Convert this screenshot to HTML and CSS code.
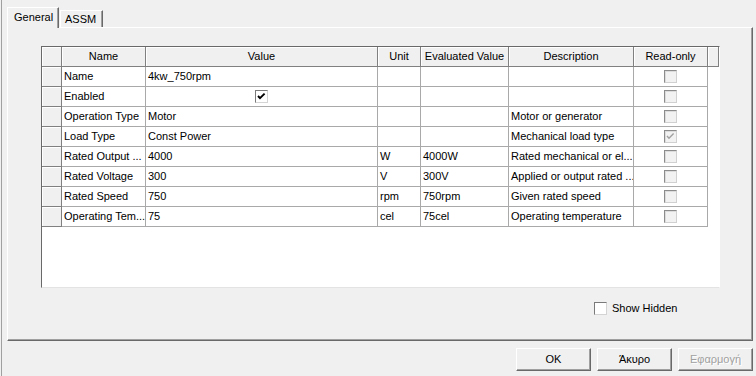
FILE: index.html
```html
<!DOCTYPE html>
<html>
<head>
<meta charset="utf-8">
<link rel="stylesheet" href="styles.css">
</head>
<body>
<div class="window">
  <div class="tabstrip">
    <div class="tab active">General</div>
    <div class="tab">ASSM</div>
  </div>
  <div class="panel">
    <div class="grid">
      <div class="hc"></div>
      <div class="hc">Name</div>
      <div class="hc">Value</div>
      <div class="hc">Unit</div>
      <div class="hc">Evaluated Value</div>
      <div class="hc">Description</div>
      <div class="hc">Read-only</div>
      <div class="hc last"></div>

      <div class="rh"></div><div class="c">Name</div><div class="c">4kw_750rpm</div><div class="c"></div><div class="c"></div><div class="c"></div><div class="c ctr"><span class="cb dis"></span></div><div class="e"></div>

      <div class="rh"></div><div class="c">Enabled</div><div class="c ctr"><span class="cb on"><svg width="11" height="11" viewBox="0 0 11 11"><polyline points="2,5 4,7.2 8.6,2.6" fill="none" stroke="#000" stroke-width="1.9"/></svg></span></div><div class="c"></div><div class="c"></div><div class="c"></div><div class="c ctr"><span class="cb dis"></span></div><div class="e"></div>

      <div class="rh"></div><div class="c">Operation Type</div><div class="c">Motor</div><div class="c"></div><div class="c"></div><div class="c">Motor or generator</div><div class="c ctr"><span class="cb dis"></span></div><div class="e"></div>

      <div class="rh"></div><div class="c">Load Type</div><div class="c">Const Power</div><div class="c"></div><div class="c"></div><div class="c">Mechanical load type</div><div class="c ctr"><span class="cb dis"><svg width="11" height="11" viewBox="0 0 11 11"><polyline points="2,5 4,7.2 8.6,2.6" fill="none" stroke="#a0a0a0" stroke-width="1.4"/></svg></span></div><div class="e"></div>

      <div class="rh"></div><div class="c">Rated Output ...</div><div class="c">4000</div><div class="c">W</div><div class="c">4000W</div><div class="c">Rated mechanical or el...</div><div class="c ctr"><span class="cb dis"></span></div><div class="e"></div>

      <div class="rh"></div><div class="c">Rated Voltage</div><div class="c">300</div><div class="c">V</div><div class="c">300V</div><div class="c">Applied or output rated ...</div><div class="c ctr"><span class="cb dis"></span></div><div class="e"></div>

      <div class="rh"></div><div class="c">Rated Speed</div><div class="c">750</div><div class="c">rpm</div><div class="c">750rpm</div><div class="c">Given rated speed</div><div class="c ctr"><span class="cb dis"></span></div><div class="e"></div>

      <div class="rh"></div><div class="c">Operating Tem...</div><div class="c">75</div><div class="c">cel</div><div class="c">75cel</div><div class="c">Operating temperature</div><div class="c ctr"><span class="cb dis"></span></div><div class="e"></div>
    </div>
    <div class="showrow">
      <span class="cb plain"></span>
      <span class="lbl">Show Hidden</span>
    </div>
  </div>
  <div class="buttons">
    <div class="btn">OK</div>
    <div class="btn">Άκυρο</div>
    <div class="btn disabled">Εφαρμογή</div>
  </div>
</div>
</body>
</html>
```
FILE: styles.css
```css
* { box-sizing: border-box; }
html, body { margin: 0; padding: 0; }
body {
  background: #f0f0f0;
  font-family: "Liberation Sans", Arial, sans-serif;
  font-size: 11px;
  color: #000;
  width: 756px;
  height: 376px;
  overflow: hidden;
}
.window {
  margin-left: 1px;
  border-left: 1px solid #a0a0a0;
  height: 376px;
  padding: 7px 3px 0 5px;
}
.tabstrip {
  display: flex;
  align-items: flex-end;
  height: 20px;
}
.tab {
  height: 17px;
  padding: 0 6px 0 4px;
  line-height: 16px;
  border-top: 1px solid #fff;
  border-left: 1px solid #fff;
  border-right: 1px solid #696969;
  box-shadow: inset -1px 0 0 #a0a0a0;
  background: #f0f0f0;
}
.tab.active {
  height: 21px;
  margin-bottom: -1px;
  width: 52px;
  padding: 0 0 0 6px;
  line-height: 18px;
  position: relative;
  z-index: 1;
}
.tab + .tab { margin-left: 1px; }
.panel {
  height: 314px;
  border-top: 1px solid #fff;
  border-left: 1px solid #fff;
  border-right: 1px solid #696969;
  border-bottom: 1px solid #696969;
  box-shadow: inset -1px -1px 0 #a0a0a0;
  padding: 18px 0 0 33px;
}
.grid {
  width: 679px;
  height: 242px;
  background: #fff;
  border-top: 1px solid #696969;
  border-left: 1px solid #696969;
  border-right: 1px solid #fff;
  border-bottom: 1px solid #e3e3e3;
  display: grid;
  grid-template-columns: 20px 84px 232px 43px 88px 125px 74px 11px;
  grid-auto-rows: 20px;
  align-content: start;
}
.hc, .rh {
  background: #f0f0f0;
  border-right: 1px solid #808080;
  border-bottom: 1px solid #808080;
  box-shadow: inset 1px 1px 0 #fff;
  text-align: center;
  line-height: 19px;
  white-space: nowrap;
  overflow: hidden;
}
.c {
  border-right: 1px solid #a9a9a9;
  border-bottom: 1px solid #a9a9a9;
  padding-left: 2px;
  line-height: 19px;
  white-space: nowrap;
  overflow: hidden;
}
.c.ctr {
  display: flex;
  align-items: center;
  justify-content: center;
  padding-left: 0;
}
.e { background: #fff; }
.cb {
  display: inline-flex;
  align-items: center;
  justify-content: center;
  width: 13px;
  height: 13px;
  border-top: 1px solid #7a7a7a;
  border-left: 1px solid #7a7a7a;
  border-right: 1px solid #e3e3e3;
  border-bottom: 1px solid #e3e3e3;
}
.cb.on, .cb.plain { background: #fff; border-right-color: #d4d4d4; border-bottom-color: #d4d4d4; }
.cb.dis {
  background: #f2f2f2;
  border-top-color: #8c8c8c;
  border-left-color: #8c8c8c;
  border-right-color: #d0d0d0;
  border-bottom-color: #d0d0d0;
  box-shadow: inset 1px 1px 0 #dcdcdc;
}
.cb.on { margin-left: -1px; }
.showrow {
  display: flex;
  align-items: center;
  gap: 5px;
  margin-top: 14px;
  padding-left: 553px;
  height: 13px;
}
.lbl { line-height: 13px; }
.buttons {
  display: flex;
  justify-content: flex-end;
  gap: 6px;
  margin-top: 7px;
}
.btn {
  width: 75px;
  height: 23px;
  text-align: center;
  line-height: 21px;
  background: #f0f0f0;
  border-top: 1px solid #fff;
  border-left: 1px solid #fff;
  border-right: 1px solid #696969;
  border-bottom: 1px solid #696969;
  box-shadow: inset -1px -1px 0 #a0a0a0;
}
.btn.disabled {
  color: #a0a0a0;
  text-shadow: 1px 1px 0 #fff;
}
```
